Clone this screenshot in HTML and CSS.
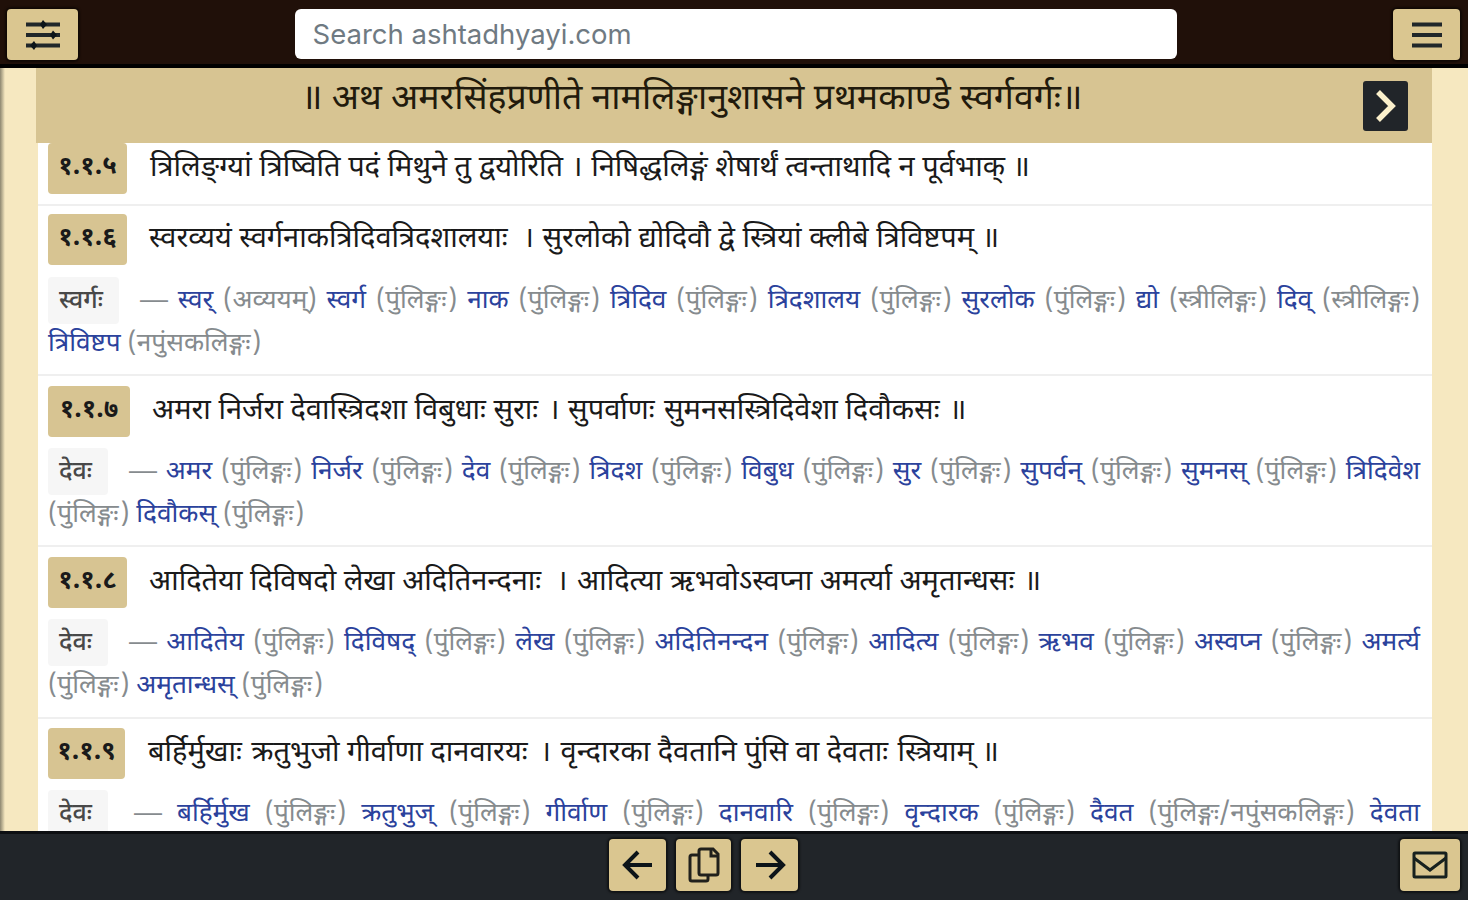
FILE: index.html
```
<!DOCTYPE html>
<html lang="sa">
<head>
    <meta charset="UTF-8">
    <title>Ashtadhyayi</title>
    <meta name="viewport" content="width=device-width, initial-scale=1" />

    <link rel="stylesheet" href="styles.css">
</head>
<body>
    <header class="topbar">
        <button class="btn btnSettings">
            <svg width="36" height="32" viewBox="0 0 36 32">
                <path d="M1 5.500h34M1 16h34M1 26.500h34" stroke="#20272a" stroke-width="4"/>
                <path d="M18 1l4 4.500-4 4.500-3-4.500zM28 11.500l4 4.500-4 4.500-3-4.500zM9 22l3 4.500-3 4.500-4-4.500z" fill="#0c1419"/>
            </svg>
        </button>
        <input type="text" class="search" placeholder="Search ashtadhyayi.com">
        <button class="btn btnMenu">
            <svg width="32" height="28" viewBox="0 0 32 28">
                <path d="M1 3.500h30M1 14h30M1 24.500h30" stroke="#20272a" stroke-width="4"/>
            </svg>
        </button>
    </header>

    <main class="page">
        <div class="heading">
            <h1 class="title">॥ अथ अमरसिंहप्रणीते नामलिङ्गानुशासने प्रथमकाण्डे स्वर्गवर्गः॥</h1>
            <button class="next">
                <svg width="22" height="34" viewBox="0 0 22 34">
                    <path d="M3 3l14 14L3 31" fill="none" stroke="#fbf0cb" stroke-width="5.500"/>
                </svg>
            </button>
        </div>

        <section class="verse v5">
            <div class="shloka"><span class="num">१.१.५</span><span class="text">त्रिलिङ्ग्यां त्रिष्विति पदं मिथुने तु द्वयोरिति <span class="danda">।</span> निषिद्धलिङ्गं शेषार्थं त्वन्ताथादि न पूर्वभाक् ॥</span></div>
        </section>

        <section class="verse v6">
            <div class="shloka"><span class="num">१.१.६</span><span class="text">स्वरव्ययं स्वर्गनाकत्रिदिवत्रिदशालयाः&hairsp; <span class="danda">।</span> सुरलोको द्योदिवौ द्वे स्त्रियां क्लीबे त्रिविष्टपम् ॥</span></div>
            <div class="gloss">
                <div class="row"><span class="head">स्वर्गः&thinsp;</span><span class="words full"><span class="dash">—</span> <a>स्वर्</a> (अव्ययम्) <a>स्वर्ग</a> (पुंलिङ्गः&hairsp;) <a>नाक</a> (पुंलिङ्गः&hairsp;) <a>त्रिदिव</a> (पुंलिङ्गः&hairsp;) <a>त्रिदशालय</a> (पुंलिङ्गः&hairsp;) <a>सुरलोक</a> (पुंलिङ्गः&hairsp;) <a>द्यो</a> (स्त्रीलिङ्गः&hairsp;) <a>दिव्</a> (स्त्रीलिङ्गः&hairsp;)</span></div>
                <div class="row"><span class="words"><a>त्रिविष्टप</a> (नपुंसकलिङ्गः&hairsp;)</span></div>
            </div>
        </section>

        <section class="verse v7">
            <div class="shloka"><span class="num">१.१.७</span><span class="text">अमरा निर्जरा देवास्त्रिदशा विबुधाः सुराः&hairsp; <span class="danda">।</span> सुपर्वाणः&hairsp; सुमनसस्त्रिदिवेशा दिवौकसः&hairsp; ॥</span></div>
            <div class="gloss">
                <div class="row"><span class="head">देवः&thinsp;</span><span class="words full"><span class="dash">—</span> <a>अमर</a> (पुंलिङ्गः&hairsp;) <a>निर्जर</a> (पुंलिङ्गः&hairsp;) <a>देव</a> (पुंलिङ्गः&hairsp;) <a>त्रिदश</a> (पुंलिङ्गः&hairsp;) <a>विबुध</a> (पुंलिङ्गः&hairsp;) <a>सुर</a> (पुंलिङ्गः&hairsp;) <a>सुपर्वन्</a> (पुंलिङ्गः&hairsp;) <a>सुमनस्</a> (पुंलिङ्गः&hairsp;) <a>त्रिदिवेश</a></span></div>
                <div class="row"><span class="words">(पुंलिङ्गः&hairsp;) <a>दिवौकस्</a> (पुंलिङ्गः&hairsp;)</span></div>
            </div>
        </section>

        <section class="verse v8">
            <div class="shloka"><span class="num">१.१.८</span><span class="text">आदितेया दिविषदो लेखा अदितिनन्दनाः&hairsp; <span class="danda">।</span> आदित्या ऋभवोऽस्वप्&zwj;ना अमर्त्या अमृतान्धसः&hairsp; ॥</span></div>
            <div class="gloss">
                <div class="row"><span class="head">देवः&thinsp;</span><span class="words full"><span class="dash">—</span> <a>आदितेय</a> (पुंलिङ्गः&hairsp;) <a>दिविषद्</a> (पुंलिङ्गः&hairsp;) <a>लेख</a> (पुंलिङ्गः&hairsp;) <a>अदितिनन्दन</a> (पुंलिङ्गः&hairsp;) <a>आदित्य</a> (पुंलिङ्गः&hairsp;) <a>ऋभव</a> (पुंलिङ्गः&hairsp;) <a>अस्वप्&zwj;न</a> (पुंलिङ्गः&hairsp;) <a>अमर्त्य</a></span></div>
                <div class="row"><span class="words">(पुंलिङ्गः&hairsp;) <a>अमृतान्धस्</a> (पुंलिङ्गः&hairsp;)</span></div>
            </div>
        </section>

        <section class="verse v9">
            <div class="shloka"><span class="num">१.१.९</span><span class="text">बर्हिर्मुखाः&hairsp; क्रतुभुजो गीर्वाणा दानवारयः&hairsp; <span class="danda">।</span> वृन्दारका दैवतानि पुंसि वा देवताः&hairsp; स्त्रियाम् ॥</span></div>
            <div class="gloss">
                <div class="row"><span class="head">देवः&thinsp;</span><span class="words full"><span class="dash">—</span> <a>बर्हिर्मुख</a> (पुंलिङ्गः&hairsp;) <a>क्रतुभुज्</a> (पुंलिङ्गः&hairsp;) <a>गीर्वाण</a> (पुंलिङ्गः&hairsp;) <a>दानवारि</a> (पुंलिङ्गः&hairsp;) <a>वृन्दारक</a> (पुंलिङ्गः&hairsp;) <a>दैवत</a> (पुंलिङ्गः/नपुंसकलिङ्गः&hairsp;) <a>देवता</a></span></div>
            </div>
        </section>
    </main>

    <footer class="bottombar">
        <div class="pager">
            <button class="btn btnPage">
                <svg width="32" height="32" viewBox="0 0 32 32">
                    <path d="M30 16H4M16 3L3 16l13 13" fill="none" stroke="#0c1419" stroke-width="4"/>
                </svg>
            </button>
            <button class="btn btnCopy">
                <svg width="32" height="36" viewBox="0 0 32 36" fill="none" stroke="#20201c" stroke-width="3">
                    <path d="M11 8H4q-2 0-2 2v22q0 2 2 2h14q2 0 2-2v-4"/>
                    <path d="M13 2h12l5 5v19q0 2-2 2H13q-2 0-2-2V4q0-2 2-2z"/>
                    <path d="M23 2v7h7"/>
                </svg>
            </button>
            <button class="btn btnPage">
                <svg width="32" height="32" viewBox="0 0 32 32">
                    <path d="M2 16h26M16 3l13 13-13 13" fill="none" stroke="#0c1419" stroke-width="4"/>
                </svg>
            </button>
        </div>
        <button class="btn btnMail">
            <svg width="36" height="28" viewBox="0 0 36 28" fill="none" stroke="#17211f" stroke-width="3">
                <rect x="2" y="2" width="32" height="24" rx="1"/>
                <path d="M2 7l16 12L34 7"/>
            </svg>
        </button>
    </footer>
</body>
</html>
```
FILE: styles.css
```
* {
    box-sizing: border-box;
}

body {
    margin: 0;
    height: 900px;
    overflow: hidden;
    display: flex;
    flex-direction: column;
    background: #f6e8c0;
    color: #1a1a1a;
    font-family: "Noto Sans Devanagari", "Noto Sans", sans-serif;
}

.topbar {
    height: 68px;
    flex: none;
    display: flex;
    align-items: flex-start;
    justify-content: space-between;
    padding: 9px 8px 0 7px;
    background: #201009;
    border-bottom: 4px solid #000;
}

.btn {
    display: flex;
    align-items: center;
    justify-content: center;
    padding: 0;
    border: 0;
    border-radius: 4px;
    background: #dac690;
    box-shadow: 0 0 2px 2px rgba(0, 0, 0, 0.5);
}

.btnSettings {
    width: 71px;
    height: 51px;
}

.btnMenu {
    width: 67px;
    height: 51px;
}

.search {
    width: 882px;
    height: 50px;
    padding: 0 18px;
    border: 0;
    border-radius: 6px;
    background: #fff;
    font: 27.5px Inter, sans-serif;
}

.search::placeholder {
    color: #6f7a82;
}

.page {
    flex: 1;
    min-height: 0;
    overflow: hidden;
    padding: 0 36px;
    background: linear-gradient(90deg, #8d8770 0, #f6e8c0 5px);
}

.heading {
    height: 75px;
    display: flex;
    align-items: center;
    justify-content: space-between;
    padding: 0 24px 0 265px;
    background: #d7c492;
}

.title {
    margin: 0 0 9px;
    font-size: 35.7px;
    font-weight: 400;
    line-height: 50px;
    white-space: nowrap;
    color: #211a0c;
}

.next {
    width: 45px;
    height: 50px;
    display: flex;
    align-items: center;
    justify-content: center;
    padding: 0;
    border: 0;
    border-radius: 3px;
    background: #212529;
}

.verse {
    height: 172px;
    margin-left: 2px;
    padding: 10px 12px 0 10px;
    background: #fff;
    border-bottom: 2px solid #efefef;
}

.v5 {
    height: 63px;
    padding-top: 0;
}

.v6 {
    height: 170px;
    padding-top: 8px;
}

.v7 {
    height: 171px;
}

.v9 {
    padding-top: 9px;
}

.shloka {
    display: flex;
    height: 52px;
    gap: 22px;
}

.v5 .shloka,
.v9 .shloka {
    gap: 23px;
}

.num {
    width: 79px;
    height: 51px;
    border-radius: 4px;
    background: #d7c492;
    font-size: 26px;
    font-weight: 700;
    line-height: 50px;
    text-align: center;
}

.v7 .num {
    width: 82px;
}

.v9 .num {
    width: 77px;
}

.text {
    font-size: 29px;
    line-height: 52px;
    white-space: nowrap;
}

.danda {
    margin: 0 1px;
}

.v6 .danda,
.v8 .danda {
    margin-left: 6px;
}

.v8 .danda {
    margin-right: 2px;
}

.v9 .danda {
    margin: 0 2px 0 3px;
}

.gloss {
    padding-top: 10px;
    font-size: 26.2px;
    color: #868b8e;
}

.v6 .gloss {
    padding-top: 11px;
}

.row {
    display: flex;
    height: 43px;
    line-height: 50px;
    white-space: nowrap;
}

.head {
    height: 47px;
    flex: none;
    margin-right: 21px;
    padding: 0 11px;
    border-radius: 4px;
    background: #f6f6f6;
    color: #484848;
    font-size: 25px;
    font-weight: 500;
}

.words a {
    color: #2b429c;
}

.full {
    flex: 1;
    text-align-last: justify;
}

.dash {
    font-family: "Liberation Sans", sans-serif;
    font-size: 28px;
    line-height: 1;
}

.v9 .head {
    margin-right: 26px;
}

.bottombar {
    height: 69px;
    flex: none;
    display: flex;
    align-items: flex-start;
    justify-content: flex-end;
    padding: 5px 8px 0 0;
    border-top: 3px solid #0d0f12;
    background: #212529;
}

.pager {
    display: flex;
    gap: 10px;
    margin-right: 602px;
}

.btnPage {
    width: 57px;
    height: 52px;
}

.btnCopy {
    width: 55px;
    height: 52px;
}

.btnMail {
    width: 60px;
    height: 52px;
}
```
